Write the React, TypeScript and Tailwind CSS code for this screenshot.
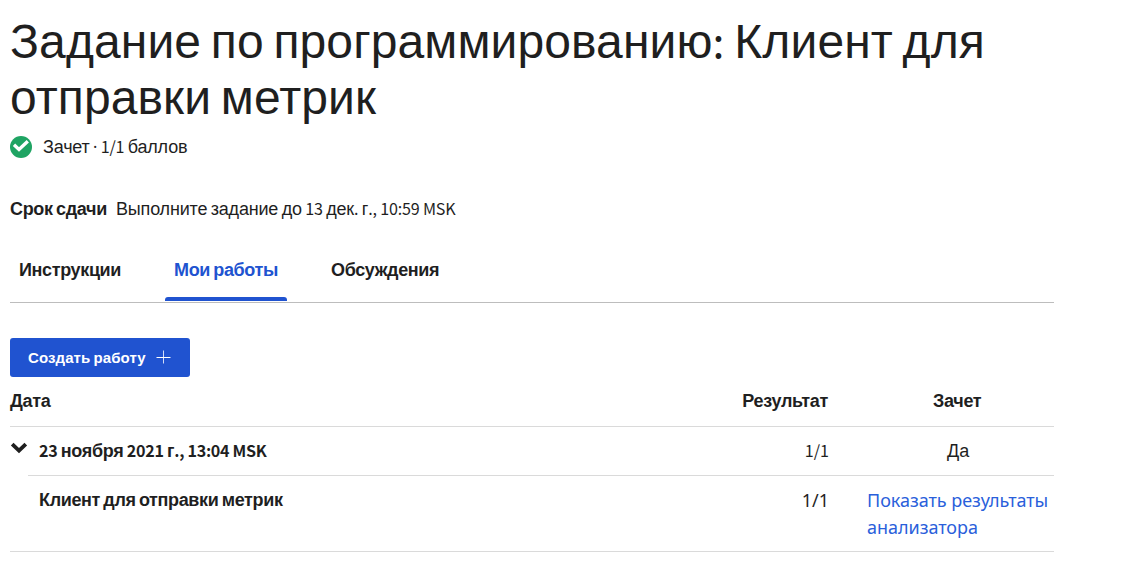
function T({ children }: { children: string }) {
  const runs = children.split(/([^А-Яа-яЁё·]+)/);
  return (
    <>
      {runs.map((run, i) =>
        i % 2 ? (
          <span key={i} className="font-['Noto_Sans_CJK_JP',sans-serif] text-[0.895em] leading-none whitespace-pre">{run}</span>
        ) : run === '·' ? (
          <span key={i} className="font-['Noto_Sans',sans-serif] text-[0.9em] leading-none">{run}</span>
        ) : (
          run
        ),
      )}
    </>
  );
}

export default function App() {
  return (
    <main className="h-[562px] w-[1125px] overflow-hidden bg-white pl-[10px] font-['Liberation_Sans',sans-serif] text-[18px] leading-[27px] text-[#1f1f1f]">
      <div className="w-[1044px]">
        <h1 className="pt-[14px] text-[48px] leading-[56px] tracking-[0.1px]">
          <span className="block"><T>Задание по программированию: Клиент для</T></span>
          <span className="block"><T>отправки метрик</T></span>
        </h1>
        <div className="mt-[7px] flex h-[27px] items-center tracking-[-0.18px]">
          <svg className="mr-[11px] size-[22px]" viewBox="0 0 22 22">
            <circle cx="11" cy="11" r="11" fill="#1fa463" />
            <path d="M4 8.8 9 13.4 17.8 5.3" fill="none" stroke="white" strokeWidth="3.4" />
          </svg>
          <span className="pt-0.5"><T>Зачет · 1/1 баллов</T></span>
        </div>
        <div className="mt-[35px] flex h-[27px] items-center pt-0.5">
          <strong className="mr-[9px] tracking-[-0.32px]"><T>Срок сдачи</T></strong>
          <span className="tracking-[-0.18px]"><T>Выполните задание до 13 дек. г., 10:59 MSK</T></span>
        </div>
        <nav className="mt-[33px] flex h-[48px] border-b border-[#bdbdbd] font-bold tracking-[-0.36px]">
          <a className="mr-[44px] h-[46px] w-[111px] px-[9px] pt-[2px] whitespace-nowrap"><T>Инструкции</T></a>
          <a className="relative mr-[35px] h-[46px] w-[122px] px-[9px] pt-[2px] whitespace-nowrap text-[#2053d0]">
            <T>Мои работы</T>
            <span className="absolute bottom-0 left-0 h-1 w-full rounded-t-[3px] bg-[#2053d0]" />
          </a>
          <a className="h-[46px] px-[9px] pt-[2px]"><T>Обсуждения</T></a>
        </nav>
        <button className="mt-[35px] flex h-[39px] w-[180px] items-center rounded-[3px] bg-[#2053d0] pl-[18px] text-[15px] font-bold tracking-[0.1px] text-white">
          <span className="whitespace-nowrap"><T>Создать работу</T></span>
          <svg className="ml-[10px] size-[15px]" viewBox="0 0 15 15" stroke="white" fill="none">
            <path d="M.5 7.5h14" />
            <path d="M7.5.5v13" opacity=".8" />
          </svg>
        </button>
        <div className="grid h-[50px] grid-cols-[718px_100px_226px] border-b border-[#dadada] pt-[11px] font-bold tracking-[-0.3px]">
          <span><T>Дата</T></span>
          <span className="text-right"><T>Результат</T></span>
          <span className="pl-[105px]"><T>Зачет</T></span>
        </div>
        <div className="flex h-[49px]">
          <svg className="mt-[14px] h-[15px] w-[18px]" viewBox="0 0 18 15">
            <path d="m2.2 3.2 6.8 6.5 6.8-6.5" fill="none" stroke="#1f1f1f" strokeWidth="3.8" />
          </svg>
          <div className="flex flex-1 border-b border-[#dadada] pt-[11px] pl-[11px]">
            <strong className="flex-1 tracking-[-0.3px]"><T>23 ноября 2021 г., 13:04 MSK</T></strong>
            <span className="w-[80px] text-right"><T>1/1</T></span>
            <span className="w-[225px] pl-[118px]"><T>Да</T></span>
          </div>
        </div>
        <div className="flex h-[76px] border-b border-[#dadada] pt-[11px] pl-[28px]">
          <strong className="flex-1 pl-px tracking-[-0.36px]"><T>Клиент для отправки метрик</T></strong>
          <span className="w-[80px] text-right font-['Noto_Sans',sans-serif]">1/1</span>
          <a className="w-[225px] pl-[38px] font-['Noto_Sans',sans-serif] tracking-[-0.03px] text-[#2a5fdb]">Показать результаты анализатора</a>
        </div>
      </div>
    </main>
  );
}
